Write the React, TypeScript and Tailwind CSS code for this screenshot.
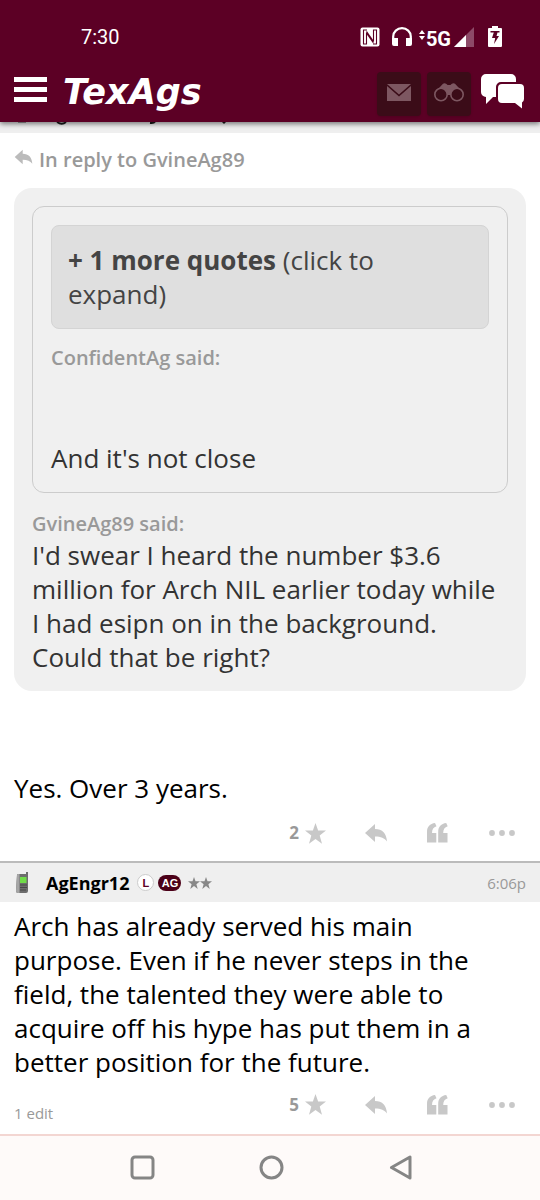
import type { ReactNode } from 'react'

const ReplyIcon: React.FC<{ className?: string }> = ({ className }) => (
  <svg viewBox="0 0 22 20" className={className} fill="currentColor" aria-hidden="true">
    <path d="M0 10 10 1v5c7.500 0 11.500 4.500 12 12.500-2.500-3.500-6-5-12-5V19z" />
  </svg>
)

const StarIcon: React.FC<{ className?: string }> = ({ className }) => (
  <svg viewBox="0 0 20 20" className={className} fill="currentColor" aria-hidden="true">
    <path d="M10 0l2.500 7.200H20l-6 4.700 2.200 7.900L10 15.200 3.800 19.800 6 11.900 0 7.200h7.500z" />
  </svg>
)

const QuoteIcon: React.FC = () => (
  <svg viewBox="0 0 21 20" className="h-5 w-[21px]" fill="currentColor" aria-hidden="true">
    <path d="M0 19.500V9C0 3.500 3 .6 8 0l1.500 3.200C6.500 4.200 5 6 5 10h4.300v9.500zM11.200 19.500V9C11.200 3.500 14.200.6 19.200 0l1.500 3.200C17.700 4.200 16.200 6 16.200 10h4.300v9.500z" />
  </svg>
)

const DotsIcon: React.FC = () => (
  <svg viewBox="0 0 26 6" className="h-[6px] w-[26px]" fill="currentColor" aria-hidden="true">
    <circle cx="3" cy="3" r="2.900" />
    <circle cx="13" cy="3" r="2.900" />
    <circle cx="23" cy="3" r="2.900" />
  </svg>
)

const StatusBar: React.FC = () => (
  <div className="flex h-[72px] items-center justify-between pt-px pr-[38px] pl-[81px]">
    <span className="font-[Roboto,sans-serif] text-[20px] leading-6">7:30</span>
    <div className="flex items-center">
      <svg viewBox="0 0 20 20" className="mr-3 h-5 w-5" aria-label="NFC">
        <rect x="0.500" y="0.500" width="19" height="19" rx="2" fill="#fff" />
        <path d="M7 3H3.500v14h3V5.500M13 17h3.500V3h-3v11.500" fill="none" stroke="#5c0025" strokeWidth="1.100" />
        <path d="M6.500 3.500 13.500 13.500V17L6.500 7z" fill="#5c0025" />
      </svg>
      <svg viewBox="0 0 20 20" className="mr-[7px] h-5 w-5" aria-label="Headphones">
        <path d="M1.200 12V9.500a8.800 8.300 0 0 1 17.600 0V12" fill="none" stroke="#fff" strokeWidth="2.200" />
        <path d="M0 11h6v8H2a2 2 0 0 1-2-2zM14 11h6v6a2 2 0 0 1-2 2h-4z" fill="#fff" />
      </svg>
      <svg viewBox="0 0 6 10" className="mb-1 h-[10px] w-[6px]" fill="#fff" aria-hidden="true">
        <path d="M3 0l3 4H0zM3 10l3-4H0z" />
      </svg>
      <span className="ml-px pt-[5px] font-[Roboto,sans-serif] text-[20px] leading-5 font-bold">5G</span>
      <svg viewBox="0 0 20 20" className="ml-[3px] h-5 w-5" aria-label="Signal">
        <path d="M0 20 20 0v20z" fill="#8d4a68" />
        <path d="M0 20 12 8v12z" fill="#fff" />
      </svg>
      <svg viewBox="0 0 14 21" className="ml-[14px] h-[21px] w-[14px]" aria-label="Charging">
        <path d="M4 0h6v2h3a1 1 0 0 1 1 1v17a1 1 0 0 1-1 1H1a1 1 0 0 1-1-1V3a1 1 0 0 1 1-1h3z" fill="#fff" />
        <path d="M2.500 5h9v1.500h-2L8.500 10H11l-5 8 1.200-6H4l1.800-5.500H2.500z" fill="#5c0025" />
      </svg>
    </div>
  </div>
)

const NavButton: React.FC<{ label: string; children: ReactNode }> = ({ label, children }) => (
  <button aria-label={label} className="flex h-11 w-11 items-center justify-center rounded-sm bg-[#3b0c18] text-[#7d5761] shadow">
    {children}
  </button>
)

const SiteHeader: React.FC = () => (
  <header className="relative z-10 bg-[#5c0025] text-white shadow-[0_2px_5px_rgba(0,0,0,0.5)]">
    <StatusBar />
    <div className="flex h-[50px] items-start justify-between pr-4 pl-[14px]">
      <div className="flex items-start">
        <button aria-label="Menu" className="mt-[5px]">
          <svg viewBox="0 0 33 25" className="h-[25px] w-[33px]" fill="#fff" aria-hidden="true">
            <path d="M0 0h33v5H0zM0 10h33v5H0zM0 20h33v5H0z" />
          </svg>
        </button>
        <a href="#" className="ml-4 font-['DejaVu_Sans',sans-serif] text-[35px] leading-10 font-bold italic">
          TexAgs
        </a>
      </div>
      <div className="flex items-start gap-[6px]">
        <NavButton label="Messages">
          <svg viewBox="0 0 24 17" className="mb-1 h-[17px] w-6" fill="currentColor" aria-hidden="true">
            <path d="M0 0h24L12 10.500zM0 2 12 12.500 24 2v15H0z" />
          </svg>
        </NavButton>
        <NavButton label="Watch list">
          <svg viewBox="0 0 30 19" className="mb-1 h-[19px] w-[30px]" aria-hidden="true">
            <path d="M5 5 9 .8q1.500-1 3.500.2l1 1h3l1-1q2-1.200 3.500-.2L25 5l-8 7h-4z" fill="currentColor" />
            <circle cx="7" cy="11.500" r="6.200" fill="#3b0c18" stroke="currentColor" strokeWidth="1.600" />
            <circle cx="23" cy="11.500" r="6.200" fill="#3b0c18" stroke="currentColor" strokeWidth="1.600" />
          </svg>
        </NavButton>
        <button aria-label="Forums" className="mt-[2px] ml-1">
          <svg viewBox="0 0 43 35" className="h-[35px] w-[43px]" fill="#fff" aria-hidden="true">
            <path d="M5 0h25a5 5 0 0 1 5 5v3H20a5 5 0 0 0-5 5v10h-3l-7 7v-7a5 5 0 0 1-5-5V5a5 5 0 0 1 5-5z" />
            <path d="M21 10h18a4 4 0 0 1 4 4v11a4 4 0 0 1-2 3.500v6L34 29H21a4 4 0 0 1-4-4V14a4 4 0 0 1 4-4z" />
          </svg>
        </button>
      </div>
    </div>
  </header>
)

// Bottom edge of the post title row that has scrolled under the header
const ScrolledRow: React.FC = () => (
  <div className="h-[11px] bg-[#efefef]">
    <svg viewBox="0 0 270 11" className="relative z-20 h-[11px] w-[270px]" fill="none" aria-hidden="true">
      <path d="M57 0q5 3.500 9 0" stroke="#111" strokeWidth="1.800" />
      <path d="M150 1q4 .5 5-1.500" stroke="#111" strokeWidth="2" />
      <path d="M222 0h4l-2 2z" fill="#111" />
      <path d="M18 .5h8" stroke="#666" strokeWidth="1" />
    </svg>
  </div>
)

const PostActions: React.FC<{ stars: number }> = ({ stars }) => (
  <div className="flex items-center text-[#c8c8c8]">
    <button className="mr-[39px] flex items-center gap-[6px]" aria-label={`${stars} stars`}>
      <span className="text-[17px] leading-6 font-bold text-[#999]">{stars}</span>
      <StarIcon className="h-[21px] w-[21px]" />
    </button>
    <button className="mr-10" aria-label="Reply">
      <ReplyIcon className="h-5 w-[22px]" />
    </button>
    <button className="mr-[41px]" aria-label="Quote">
      <QuoteIcon />
    </button>
    <button className="mr-[11px]" aria-label="More">
      <DotsIcon />
    </button>
  </div>
)

const PhoneIcon: React.FC = () => (
  <svg viewBox="0 0 14 22" className="ml-[2px] h-[22px] w-[14px]" aria-hidden="true">
    <path d="M1 3q0-1 1-1h8V0h2v19q0 2-2 2H2q-2 0-2-2z" fill="#6d6d6d" />
    <path d="M1 3q0-1 1-1h1.500v19H2q-2 0-2-2z" fill="#a5a5a5" />
    <path d="M4 5h6.500v6H4z" fill="#70dc48" />
    <path d="M4 13h7M4 15.500h7M4 18h6" stroke="#484848" strokeWidth="1" />
  </svg>
)

export default function App() {
  return (
    <div className="flex min-h-screen flex-col bg-white font-['Open_Sans','Noto_Sans',sans-serif] text-[26px] leading-[34px] text-black">
      <SiteHeader />
      <main className="flex-1">
        <ScrolledRow />

        <article className="border-b-2 border-[#bbb]">
          <div className="px-[14px]">
            <a href="#" className="flex h-[55px] items-start gap-[6px] pt-[13px] text-[20px] leading-7 font-semibold text-[#999]">
              <ReplyIcon className="mt-[3px] h-4 w-[19px] text-[#bbb]" />
              In reply to GvineAg89
            </a>

            <blockquote className="rounded-[18px] bg-[#f0f0f0] px-[18px] pt-[18px] pb-[17px] text-[#333]">
              <blockquote className="mb-[17px] rounded-xl border border-[#ccc] px-[18px] pt-[18px] pb-[17px]">
                <button className="block w-full rounded-lg border border-[#d4d4d4] bg-[#dfdfdf] px-4 py-[17px] text-left text-[#444]">
                  <b>+ 1 more quotes</b> (click to expand)
                </button>
                <p className="mt-3 text-[20px] leading-[34px] font-semibold text-[#999]">ConfidentAg said:</p>
                <p className="mt-[66px]">And it's not close</p>
              </blockquote>
              <p className="text-[20px] leading-7 font-semibold text-[#999]">GvineAg89 said:</p>
              <p className="pr-1">
                I'd swear I heard the number $3.6 million for Arch NIL earlier today while I had esipn on in the background. Could that be right?
              </p>
            </blockquote>

            <p className="mt-20">Yes. Over 3 years.</p>
          </div>
          <div className="flex h-14 items-center justify-end px-[14px]">
            <PostActions stars={2} />
          </div>
        </article>

        <article>
          <div className="flex h-[39px] items-center bg-[#efefef] px-[14px]">
            <PhoneIcon />
            <a href="#" className="ml-4 text-[18px] leading-6 font-bold">AgEngr12</a>
            <span className="ml-2 flex h-[17px] w-[17px] items-center justify-center rounded-full border border-[#ccc] bg-white font-['Liberation_Sans',sans-serif] text-[11px] leading-4 font-bold text-[#5c0025]">
              L
            </span>
            <span className="ml-1 flex h-4 w-[23px] items-center justify-center rounded-full bg-[#4b0018] font-['Liberation_Sans',sans-serif] text-[11px] leading-4 font-bold text-white">
              AG
            </span>
            <span className="ml-[7px] flex text-[#888]">
              <StarIcon className="h-3 w-3" />
              <StarIcon className="h-3 w-3" />
            </span>
            <time className="ml-auto text-[15px] leading-6 text-[#999]">6:06p</time>
          </div>
          <p className="pt-[7px] pr-6 pl-[14px]">
            Arch has already served his main purpose. Even if he never steps in the field, the talented they were able to acquire off his hype has put them in a better position for the future.
          </p>
          <div className="flex h-[51px] items-center justify-between px-[14px]">
            <span className="pt-4 text-[15px] leading-5 text-[#999]">1 edit</span>
            <PostActions stars={5} />
          </div>
        </article>
      </main>

      <nav className="flex h-[66px] items-start justify-center gap-[104px] border-t-2 border-[#f3d6d2] bg-[#fefaf9] pt-[19px] pl-[3px] text-[#858585]">
        <button aria-label="Recent apps">
          <svg viewBox="0 0 25 25" className="h-[25px] w-[25px]" fill="none" stroke="currentColor" strokeWidth="3">
            <rect x="2" y="2" width="21" height="21" rx="3" />
          </svg>
        </button>
        <button aria-label="Home">
          <svg viewBox="0 0 25 25" className="h-[25px] w-[25px]" fill="none" stroke="currentColor" strokeWidth="3">
            <circle cx="12.500" cy="12.500" r="10.500" />
          </svg>
        </button>
        <button aria-label="Back">
          <svg viewBox="0 0 25 25" className="h-[25px] w-[25px]" fill="none" stroke="currentColor" strokeWidth="3" strokeLinejoin="round">
            <path d="M22 2v21L3.500 12.500z" />
          </svg>
        </button>
      </nav>
    </div>
  )
}
